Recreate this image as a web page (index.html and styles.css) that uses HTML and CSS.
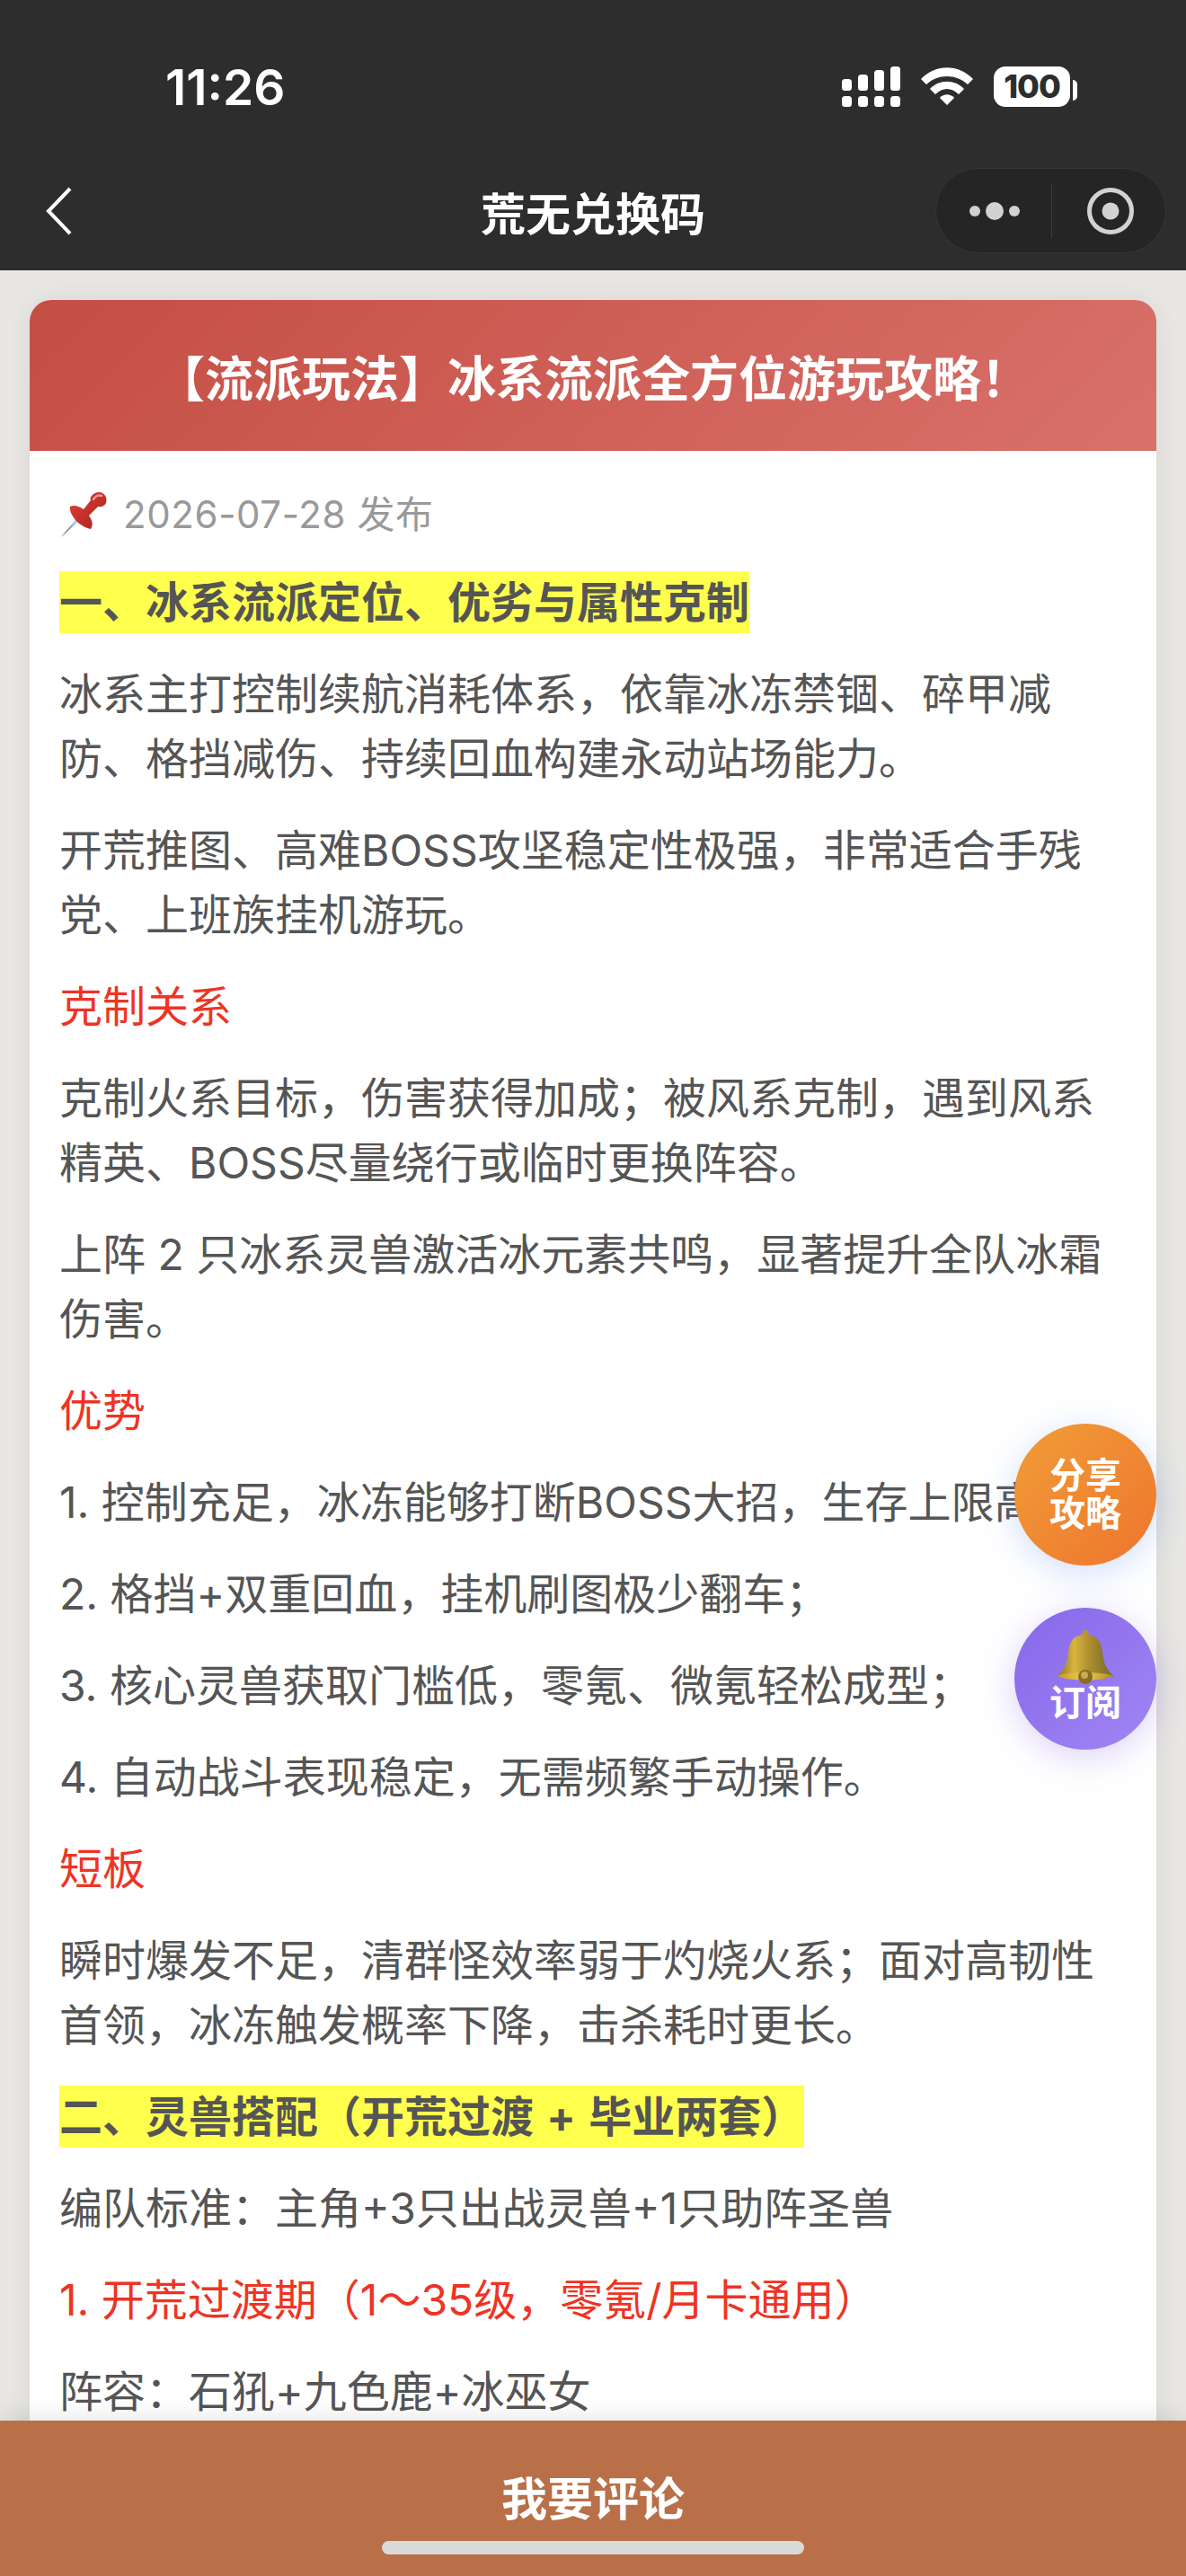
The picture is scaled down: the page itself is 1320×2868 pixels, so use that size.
FILE: index.html
```html
<!DOCTYPE html>
<html lang="zh-CN">

<head>
    <meta charset="UTF-8">
    <meta name="viewport" content="width=device-width, initial-scale=1.0">
    <title>荒无兑换码</title>
    <link rel="stylesheet" href="styles.css">
</head>

<body>
    <div class="app">
        <header class="top-bar">
            <div class="status-bar">
                <span class="time">11:26</span>
                <div class="status-icons">
                    <svg class="signal" width="65" height="45" viewBox="0 0 65 45" fill="#fff">
                        <rect x="0" y="14" width="11" height="13" rx="3.5"/>
                        <rect x="18" y="9" width="11" height="18" rx="3.5"/>
                        <rect x="36" y="4" width="11" height="23" rx="3.5"/>
                        <rect x="54" y="0" width="11" height="27" rx="3.5"/>
                        <rect x="0" y="33" width="11" height="12" rx="3.5"/>
                        <rect x="18" y="33" width="11" height="12" rx="3.5"/>
                        <rect x="36" y="33" width="11" height="12" rx="3.5"/>
                        <rect x="54" y="33" width="11" height="12" rx="3.5"/>
                    </svg>
                    <svg class="wifi" width="58" height="43" viewBox="0 0 58 43" fill="#fff">
                        <path d="M0 13 C16 -4 42 -4 58 13 L52 19 C39 7 19 7 6 19 Z"/>
                        <path d="M10 24 C20 13 38 13 48 24 L42 30 C34 22 24 22 16 30 Z"/>
                        <path d="M21 34 C25 29 33 29 37 34 L29 42 Z"/>
                    </svg>
                    <div class="battery">
                        <span class="battery-level">100</span>
                        <span class="battery-tip"></span>
                    </div>
                </div>
            </div>
            <nav class="nav-bar">
                <svg class="back" width="30" height="54" viewBox="0 0 30 54" fill="none" stroke="#fff" stroke-width="4">
                    <path d="M27 2 L3 27 L27 52"/>
                </svg>
                <span class="nav-title">荒无兑换码</span>
                <div class="capsule">
                    <svg class="capsule-more" width="60" height="24" viewBox="0 0 60 24" fill="#d2d2d2">
                        <circle cx="7" cy="12" r="6"/>
                        <circle cx="29" cy="12" r="10"/>
                        <circle cx="51" cy="12" r="6"/>
                    </svg>
                    <span class="capsule-line"></span>
                    <svg class="capsule-close" width="54" height="54" viewBox="0 0 54 54">
                        <circle cx="27" cy="27" r="23.5" fill="none" stroke="#d2d2d2" stroke-width="5"/>
                        <circle cx="27" cy="27" r="9.5" fill="#d2d2d2"/>
                    </svg>
                </div>
            </nav>
        </header>

        <main class="content">
            <article class="card">
                <h1 class="card-title">【流派玩法】冰系流派全方位游玩攻略！</h1>
                <div class="card-body">
                    <div class="publish-date">
                        <svg class="pin" width="52" height="52" viewBox="0 0 52 52">
                            <defs>
                                <linearGradient id="pinRed" x1="0" y1="0" x2="1" y2="1">
                                    <stop offset="0" stop-color="#e0433a"/>
                                    <stop offset="1" stop-color="#a81f1a"/>
                                </linearGradient>
                                <linearGradient id="pinNeedle" x1="0" y1="1" x2="1" y2="0">
                                    <stop offset="0" stop-color="#333"/>
                                    <stop offset="0.6" stop-color="#9cc4e8"/>
                                    <stop offset="1" stop-color="#dfe9f2"/>
                                </linearGradient>
                            </defs>
                            <path d="M0 51 L20 27 L23 30 Z" fill="url(#pinNeedle)"/>
                            <path d="M10 17 C14 15 19 16 25 20 L33 10 C31 7 36 1 42 1 C48 1 52 7 50 13 C48 17 44 18 41 17 L31 27 C35 33 36 37 33 42 C28 41 20 37 16 32 C12 27 9 21 10 17 Z" fill="url(#pinRed)"/>
                            <path d="M36 9 C38 5 42 4 45 5" fill="none" stroke="#f49b92" stroke-width="2.5" stroke-linecap="round"/>
                        </svg>
                        <span>2026-07-28 发布</span>
                    </div>

                    <p class="section-title"><span>一、冰系流派定位、优劣与属性克制</span></p>
                    <p>冰系主打控制续航消耗体系，依靠冰冻禁锢、碎甲减防、格挡减伤、持续回血构建永动站场能力。</p>
                    <p>开荒推图、高难BOSS攻坚稳定性极强，非常适合手残党、上班族挂机游玩。</p>
                    <p class="red">克制关系</p>
                    <p>克制火系目标，伤害获得加成；被风系克制，遇到风系精英、BOSS尽量绕行或临时更换阵容。</p>
                    <p>上阵 2 只冰系灵兽激活冰元素共鸣，显著提升全队冰霜伤害。</p>
                    <p class="red">优势</p>
                    <p>1. 控制充足，冰冻能够打断BOSS大招，生存上限高；</p>
                    <p>2. 格挡+双重回血，挂机刷图极少翻车；</p>
                    <p>3. 核心灵兽获取门槛低，零氪、微氪轻松成型；</p>
                    <p>4. 自动战斗表现稳定，无需频繁手动操作。</p>
                    <p class="red">短板</p>
                    <p>瞬时爆发不足，清群怪效率弱于灼烧火系；面对高韧性首领，冰冻触发概率下降，击杀耗时更长。</p>
                    <p class="section-title"><span>二、灵兽搭配（开荒过渡 + 毕业两套）</span></p>
                    <p>编队标准：主角+3只出战灵兽+1只助阵圣兽</p>
                    <p class="red">1. 开荒过渡期（1～35级，零氪/月卡通用）</p>
                    <p>阵容：石犼+九色鹿+冰巫女</p>
                </div>
            </article>

            <div class="float-btn share-btn">分享<br>攻略</div>
            <div class="float-btn subscribe-btn">
                <svg class="bell" width="62" height="60" viewBox="0 0 62 60">
                    <defs>
                        <linearGradient id="bellGold" x1="0" y1="0" x2="1" y2="0">
                            <stop offset="0" stop-color="#8f7426"/>
                            <stop offset="0.3" stop-color="#d8b53e"/>
                            <stop offset="0.6" stop-color="#a98b2d"/>
                            <stop offset="1" stop-color="#75672c"/>
                        </linearGradient>
                        <linearGradient id="bellRim" x1="0" y1="0" x2="1" y2="0">
                            <stop offset="0" stop-color="#c79a22"/>
                            <stop offset="0.5" stop-color="#f0d258"/>
                            <stop offset="1" stop-color="#a8861f"/>
                        </linearGradient>
                    </defs>
                    <circle cx="31" cy="3.5" r="3.5" fill="#b8962e"/>
                    <path d="M31 5 C18 5 13 13 12 24 C11 36 8 43 0 51 C12 56 50 56 62 51 C54 43 51 36 50 24 C49 13 44 5 31 5 Z" fill="url(#bellGold)"/>
                    <path d="M0 51 C6 46 56 46 62 51 C50 57 12 57 0 51 Z" fill="url(#bellRim)"/>
                    <circle cx="31" cy="52" r="8" fill="#8b6d20"/>
                    <circle cx="30" cy="50" r="4" fill="#cbaa55"/>
                </svg>
                <span>订阅</span>
            </div>
        </main>

        <footer class="bottom-bar">
            <span class="comment-btn">我要评论</span>
            <span class="home-bar"></span>
        </footer>
    </div>
</body>
</html>
```

FILE: styles.css
```css
* {
    margin: 0;
    padding: 0;
    box-sizing: border-box;
}

body {
    font-family: Inter, "Noto Sans CJK SC", sans-serif;
    background-color: #e8e7e3;
    color: #555;
}

.app {
    width: 1320px;
    height: 2868px;
    display: flex;
    flex-direction: column;
    overflow: hidden;
}

/* top */
.top-bar {
    height: 301px;
    flex-shrink: 0;
    background-color: #2d2d2d;
    color: #fff;
}

.status-bar {
    height: 187px;
    display: flex;
    justify-content: space-between;
    align-items: flex-start;
    padding: 66px 129px 0 184px;
}

.time {
    font-family: Inter, sans-serif;
    font-size: 55px;
    font-weight: 600;
    line-height: 62px;
}

.status-icons {
    display: flex;
    align-items: flex-start;
    gap: 23px;
    padding-top: 8px;
}

.wifi {
    margin-top: 1px;
}

.battery {
    position: relative;
    width: 85px;
    height: 45px;
    border-radius: 13px;
    background-color: #fff;
    color: #2d2d2d;
    text-align: center;
    font-family: Inter, sans-serif;
    font-size: 36px;
    font-weight: 800;
    line-height: 45px;
    letter-spacing: -1px;
}

.battery-tip {
    position: absolute;
    left: 88px;
    top: 15px;
    width: 5px;
    height: 23px;
    border-radius: 0 5px 5px 0;
    background-color: #fff;
}

.nav-bar {
    position: relative;
    height: 95px;
    display: flex;
    align-items: center;
    padding: 0 22px 0 51px;
    justify-content: space-between;
}

.nav-title {
    position: absolute;
    left: 0;
    right: 0;
    text-align: center;
    font-size: 50px;
    font-weight: 700;
}

.capsule {
    width: 257px;
    height: 95px;
    display: flex;
    align-items: center;
    border: 1px solid #363636;
    border-radius: 48px;
    background-color: #252525;
    padding-left: 36px;
}

.capsule-line {
    width: 1px;
    height: 60px;
    margin: 0 38px 0 32px;
    background-color: #3c3c3c;
}

/* card */
.content {
    position: relative;
    flex: 1;
    min-height: 0;
    padding: 33px 33px 0;
}

.card {
    border-radius: 24px 24px 0 0;
    background-color: #fff;
    box-shadow: 0 0 30px rgba(0, 0, 0, 0.07);
}

.card-title {
    height: 168px;
    display: flex;
    align-items: center;
    justify-content: center;
    border-radius: 24px 24px 0 0;
    background: linear-gradient(135deg, #c44e43, #d9716b);
    color: #fff;
    font-size: 54px;
    font-weight: 700;
}

.card-body {
    padding: 41px 33px 60px;
    font-size: 48px;
    line-height: 72px;
}

.card-body p {
    margin-bottom: 30px;
}

.publish-date {
    display: flex;
    align-items: center;
    gap: 17px;
    height: 60px;
    margin-bottom: 32px;
    color: #999;
    font-size: 42px;
    letter-spacing: 0.6px;
    line-height: 60px;
}

.pin {
    margin-left: 2px;
}

.section-title {
    font-weight: 700;
    word-spacing: 3px;
}

.section-title span {
    padding: 5px 0;
    background-color: #ffff4d;
}

.red {
    color: #ee3424;
}

/* floating buttons */
.float-btn {
    position: absolute;
    right: 33px;
    width: 158px;
    height: 158px;
    display: flex;
    flex-direction: column;
    align-items: center;
    justify-content: center;
    border-radius: 50%;
    color: #fff;
    font-size: 40px;
    font-weight: 700;
    line-height: 42px;
    text-align: center;
}

.share-btn {
    top: 1284px;
    display: block;
    padding-top: 37px;
    background: linear-gradient(135deg, #f19d38, #ee752e);
    box-shadow: 0 8px 40px rgba(100, 150, 240, 0.3);
}

.subscribe-btn {
    top: 1489px;
    justify-content: flex-start;
    padding-top: 25px;
    background: linear-gradient(135deg, #8767ea, #a086f4);
    box-shadow: 0 8px 40px rgba(130, 90, 230, 0.28);
}

/* bottom */
.bottom-bar {
    position: relative;
    height: 173px;
    flex-shrink: 0;
    display: flex;
    flex-direction: column;
    align-items: center;
    background-color: #b96f47;
    box-shadow: 0 -4px 24px rgba(0, 0, 0, 0.1);
    color: #fff;
}

.comment-btn {
    margin-top: 58px;
    font-size: 51px;
    font-weight: 700;
    line-height: 60px;
}

.home-bar {
    width: 470px;
    height: 15px;
    margin-top: 16px;
    border-radius: 8px;
    background-color: #d9d9d9;
}
```
